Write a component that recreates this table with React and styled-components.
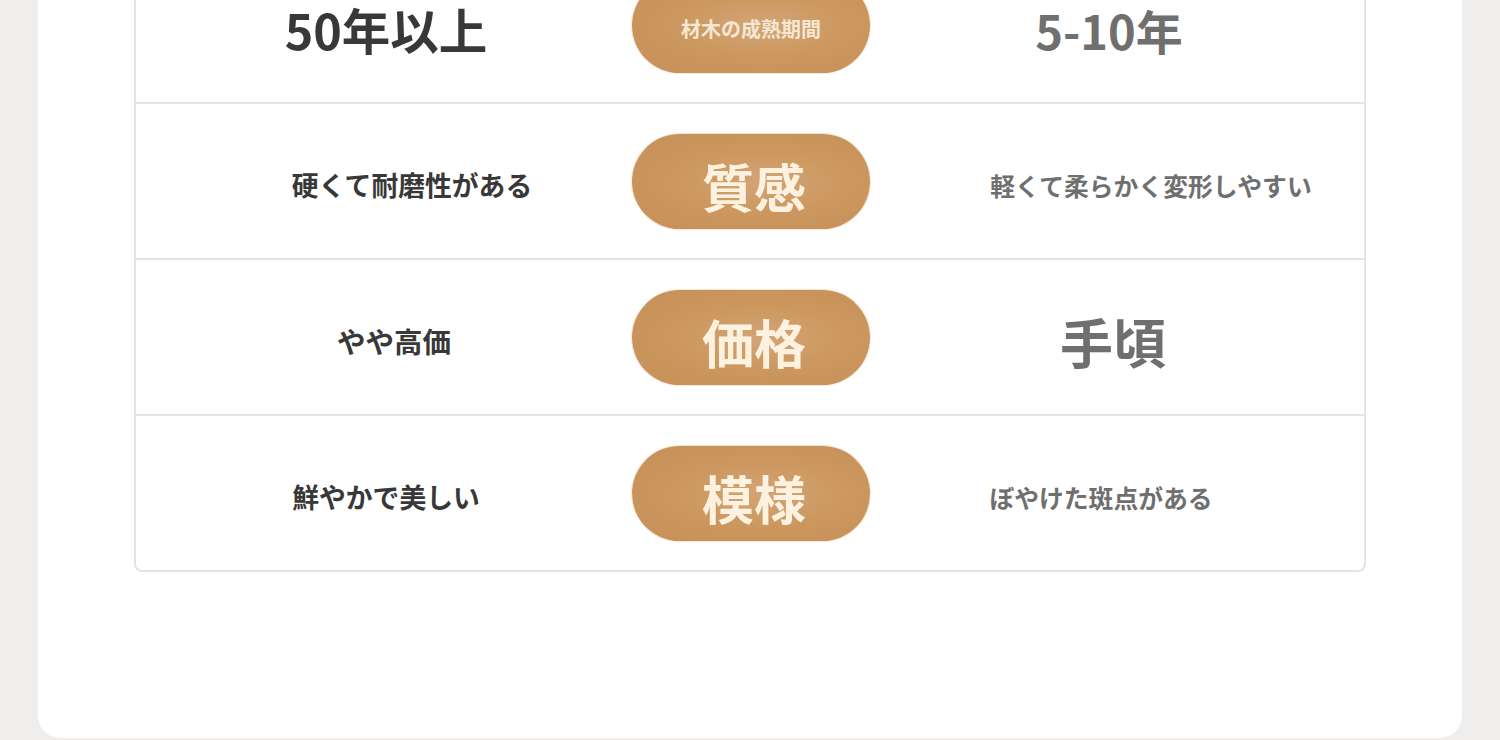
import React from "react";
import styled, { createGlobalStyle } from "styled-components";

const GlobalStyle = createGlobalStyle`
  html, body {
    margin: 0;
    padding: 0;
    background: #efeeec;
    overflow: hidden;
  }
  body {
    font-family: "Noto Sans CJK JP", "Noto Sans", sans-serif;
  }
`;

const Page = styled.div`
  padding: 0 38px 2px;
  height: 740px;
  box-sizing: border-box;
  display: flex;
  flex-direction: column;
  justify-content: flex-end;
`;

const Card = styled.div`
  background: #ffffff;
  border-radius: 0 0 22px 22px;
  padding: 0 96px 166px;
`;

const Table = styled.div`
  border: 2px solid #e4e4e4;
  border-radius: 8px;
  overflow: hidden;
`;

const Row = styled.div`
  display: grid;
  grid-template-columns: 496px 238px 1fr;
  align-items: center;
  height: 154px;
  & + & {
    border-top: 2px solid #e4e4e4;
  }
`;

const Cell = styled.div`
  display: flex;
  justify-content: center;
  align-items: center;
  padding-top: 8px;
  transform: translateX(${(p) => p.$shift || 0}px);
  color: ${(p) => (p.$side === "left" ? "#383838" : "#6f6f6f")};
  font-size: ${(p) => p.$size}px;
  font-weight: 700;
  line-height: 1;
  white-space: nowrap;
`;

const Pill = styled.div`
  height: 95px;
  border-radius: 48px;
  display: flex;
  align-items: center;
  justify-content: center;
  background: radial-gradient(ellipse at 55% 50%, #d3a476 0%, #cc985f 45%, #c68f59 100%);
  box-shadow: 0 0 0 1px rgba(240, 215, 185, 0.6);
  color: ${(p) => (p.$small ? "#f6e7d4" : "#fdf2e0")};
  font-size: ${(p) => (p.$small ? 20 : 52)}px;
  font-weight: 700;
  line-height: 1;
  padding-top: ${(p) => (p.$small ? 8 : 10)}px;
  padding-left: ${(p) => (p.$small ? 0 : 6)}px;
  box-sizing: border-box;
  white-space: nowrap;
`;

const rows = [
  {
    label: "材木の成熟期間",
    small: true,
    left: { text: "50年以上", size: 48.5, shift: 2 },
    right: { text: "5-10年", size: 47, shift: -8 },
  },
  {
    label: "質感",
    left: { text: "硬くて耐磨性がある", size: 26.8, shift: 28 },
    right: { text: "軽くて柔らかく変形しやすい", size: 24.8, shift: 34 },
  },
  {
    label: "価格",
    left: { text: "やや高価", size: 28.5, shift: 10 },
    right: { text: "手頃", size: 53, shift: -4 },
  },
  {
    label: "模様",
    left: { text: "鮮やかで美しい", size: 26.8, shift: 2 },
    right: { text: "ぼやけた斑点がある", size: 24.8, shift: -16 },
  },
];

const App = () => {
  return (
    <>
      <GlobalStyle />
      <Page>
        <Card>
          <Table>
            {rows.map((r) => (
              <Row key={r.label}>
                <Cell $side="left" $size={r.left.size} $shift={r.left.shift}>
                  {r.left.text}
                </Cell>
                <Pill $small={r.small}>{r.label}</Pill>
                <Cell $side="right" $size={r.right.size} $shift={r.right.shift}>
                  {r.right.text}
                </Cell>
              </Row>
            ))}
          </Table>
        </Card>
      </Page>
    </>
  );
};

export default App;
